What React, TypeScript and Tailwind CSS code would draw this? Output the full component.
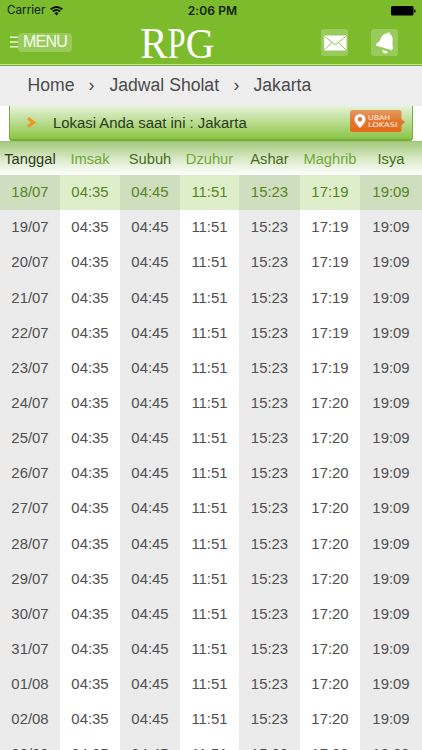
const columns = ["Tanggal", "Imsak", "Subuh", "Dzuhur", "Ashar", "Maghrib", "Isya"];
const dates = [
  "18/07", "19/07", "20/07", "21/07", "22/07", "23/07", "24/07", "25/07", "26/07",
  "27/07", "28/07", "29/07", "30/07", "31/07", "01/08", "02/08", "03/08",
];
const gridCols = "grid grid-cols-[60px_60px_60px_59px_61px_60px_62px]";

function headColor(i: number) {
  if (i === 0) return "text-[#2d3a22]";
  return i % 2 ? "text-[#71a832]" : "text-[#416f18]";
}

function cellColor(row: number, col: number) {
  if (row === 0) return col % 2 ? "bg-[#dfeeca] text-[#55861d]" : "bg-[#cfdebe] text-[#55861d]";
  return col % 2 ? "bg-white text-[#505050]" : "bg-[#ebebeb] text-[#505050]";
}

function Header() {
  return (
    <header className="h-[66px] shrink-0 border-b border-[#73b02f] bg-[#7cbc2c]">
      <div className="h-[65px] border-b border-[#c4df9d]">
        <div className="grid h-[22px] grid-cols-3 items-center pl-[7px] pr-[6px] text-[#10200a]">
          <div className="flex items-center gap-[5px] font-['Inter',sans-serif] text-[11.7px] leading-none">
            <span>Carrier</span>
            <svg width="13" height="10" viewBox="0 0 13 10" fill="none" stroke="#061004" strokeWidth="1.8">
              <path d="M.7 3.3Q6.5-1.4 12.3 3.3M2.8 5.5Q6.5 2.6 10.2 5.5" />
              <path d="M4.3 7Q6.5 5.3 8.7 7L6.5 9.4Z" fill="#061004" stroke="none" />
            </svg>
          </div>
          <div className="pl-[2px] text-center font-['Inter',sans-serif] text-[12px] font-semibold leading-none tracking-[0.1px]">2:06 PM</div>
          <svg className="justify-self-end" width="25" height="10" viewBox="0 0 25 10">
            <rect x="0" y="0" width="22.5" height="9.5" rx="1.5" fill="#000" />
            <path d="M23.2 3.3Q24.7 3.4 24.7 5T23.2 6.7Z" fill="#000" />
          </svg>
        </div>
        <div className="flex h-[40px] items-center pl-[10px] pr-[24px]">
          <svg width="8" height="12" viewBox="0 0 8 12" stroke="#eef8df" strokeWidth="1.5">
            <path d="M0 1.3h8M0 6h8M0 10.7h8" />
          </svg>
          <div className="flex h-[19px] w-[54px] items-center justify-center rounded-[4px] bg-[#99ca5c] text-[16px] leading-none tracking-[-0.75px] text-[#f7ffea]">MENU</div>
          <svg className="ml-[66px] overflow-visible" width="78" height="36" viewBox="0 0 78 36" fill="#fff" fontFamily="Liberation Serif, serif" fontSize="44">
            <text transform="translate(2.3 33.7) scale(.93 1)">R</text>
            <text transform="translate(29.8 33.7) scale(.73 1)">P</text>
            <text transform="translate(47.8 33.7) scale(.9 .98)">G</text>
          </svg>
          <div className="ml-auto flex gap-[23px]">
            <svg width="27" height="27" viewBox="0 0 27 27">
              <rect width="27" height="27" rx="3" fill="#99ca5c" />
              <rect x="3" y="6.5" width="22.5" height="15" rx="1" fill="#fff" />
              <path d="M3.5 7.3L12.4 14.6Q14.2 16 16 14.6L25 7.3M3.5 20.8L11 13.6M25 20.8L17.4 13.6" fill="none" stroke="#8fc44c" strokeWidth="1" />
            </svg>
            <svg width="27" height="27" viewBox="0 0 27 27">
              <rect width="27" height="27" rx="3" fill="#99ca5c" />
              <path d="M16.3 4.5Q16.8 3 18 3.4T18.9 5.1Q22.3 7 21.6 12Q20.9 16.5 22.2 18.5L20.9 21.3L4.8 16.6L5.9 14Q8.6 13.3 10 9Q12 4.1 16.3 4.5Z" fill="#fff" />
              <path d="M11.3 21.1L17 22.8Q15.9 25 13.6 24.3Q11 23.5 11.3 21.1Z" fill="#fff" />
            </svg>
          </div>
        </div>
      </div>
    </header>
  );
}

function LocationBadge() {
  return (
    <svg className="overflow-visible" width="55" height="22" viewBox="0 0 55 22">
      <defs>
        <linearGradient id="badge" x2="0" y2="1">
          <stop stopColor="#e39a60" />
          <stop offset=".5" stopColor="#e27732" />
          <stop offset="1" stopColor="#e86a18" />
        </linearGradient>
      </defs>
      <path d="M2.5 0H49Q51.5 0 51.5 2.5V9L55 12L51.5 15V19.5Q51.5 22 49 22H2.5Q0 22 0 19.5V2.5Q0 0 2.5 0Z" fill="url(#badge)" />
      <path d="M10 18Q4.5 12.5 4.5 9.5A5.5 5.5 0 0 1 15.5 9.5Q15.5 12.5 10 18Z" fill="#fff" />
      <circle cx="10" cy="9.3" r="2.2" fill="#df7737" />
      <g fill="#fff3e6" fontFamily="DejaVu Sans, sans-serif">
        <text fontSize="6.5" transform="translate(18 9.6)" textLength="22" lengthAdjust="spacingAndGlyphs">UBAH</text>
        <text fontSize="6.5" transform="translate(18 17.4)" textLength="29.5" lengthAdjust="spacingAndGlyphs">LOKASI</text>
      </g>
    </svg>
  );
}

export default function App() {
  return (
    <main className="flex h-[750px] w-[422px] flex-col overflow-hidden bg-white font-['Liberation_Sans',Arial,sans-serif]">
      <Header />
      <nav className="flex h-[40px] shrink-0 items-center bg-[#eeeeee] pl-[27.5px] text-[17.6px] leading-none text-[#4b4b4b]">
        <span className="w-[61px]">Home</span>
        <span className="w-[21px]">›</span>
        <span className="w-[124px]">Jadwal Sholat</span>
        <span className="w-[20px]">›</span>
        <span>Jakarta</span>
      </nav>
      <section className="h-[35px] shrink-0 pl-[9px] pr-[9px]">
        <div className="flex h-full items-center rounded-b-[3px] border-x border-b-2 border-[#75ae3c] bg-linear-to-b from-[#e6f3d8] via-[#b9db8e] to-[#8bc540] pl-[17px]">
          <svg width="10" height="11" viewBox="0 0 10 11" fill="none" stroke="#ed9722" strokeWidth="3">
            <path d="M1 1.3L6.6 5.5L1 9.7" />
          </svg>
          <span className="ml-[16px] whitespace-nowrap pt-[2px] text-[14.9px] leading-none text-[#293c20]">Lokasi Anda saat ini : Jakarta</span>
          <div className="-mt-[4px] ml-auto mr-[7px]"><LocationBadge /></div>
        </div>
      </section>
      <section className="w-[422px]">
        <div className={`${gridCols} h-[34px] border-t border-[#9dc278] bg-linear-to-b from-[#a5cb7e] via-[#d8e9c6] to-white text-[14.7px]`}>
          {columns.map((name, i) => (
            <div key={name} className={`flex items-center justify-center pt-px leading-none ${headColor(i)}`}>{name}</div>
          ))}
        </div>
        {dates.map((date, row) => (
          <div key={date} className={`${gridCols} h-[35.15px] text-[14.9px]`}>
            {[date, "04:35", "04:45", "11:51", "15:23", row < 6 ? "17:19" : "17:20", "19:09"].map((value, col) => (
              <div key={col} className={`flex items-center justify-center leading-none ${cellColor(row, col)}`}>{value}</div>
            ))}
          </div>
        ))}
      </section>
    </main>
  );
}
